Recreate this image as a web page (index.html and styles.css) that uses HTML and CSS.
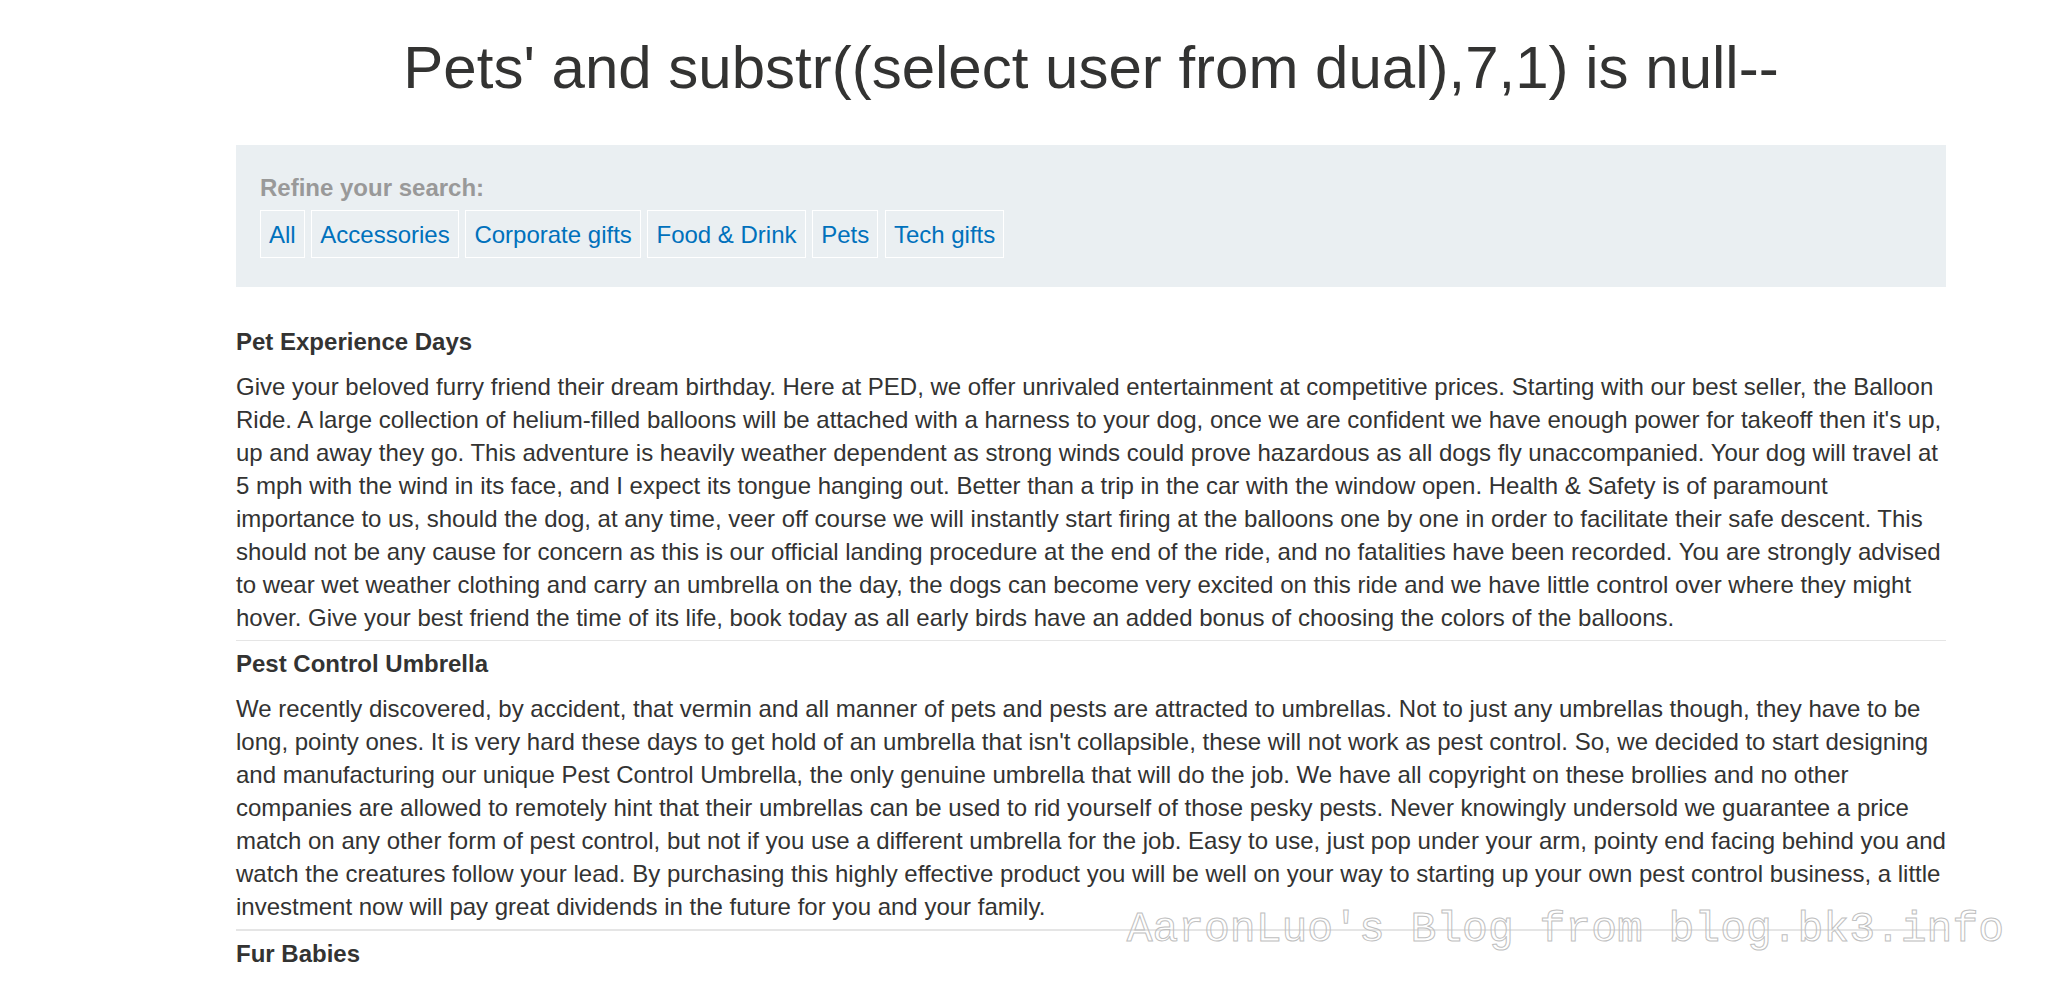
FILE: index.html
```html
<!DOCTYPE html>
<html lang="en">
<head>
<meta charset="utf-8">
<title>Pets</title>
<link rel="stylesheet" href="styles.css">
</head>
<body>
<main class="page">
  <h1 class="title">Pets' and substr((select user from dual),7,1) is null--</h1>
  <nav class="filters" aria-labelledby="refine">
    <p class="filters-label" id="refine">Refine your search:</p>
    <div class="filters-list">
      <a class="filter" href="#">All</a>
      <a class="filter" href="#">Accessories</a>
      <a class="filter" href="#">Corporate gifts</a>
      <a class="filter" href="#">Food &amp; Drink</a>
      <a class="filter" href="#">Pets</a>
      <a class="filter" href="#">Tech gifts</a>
    </div>
  </nav>
  <article class="product">
    <h2 class="product-name">Pet Experience Days</h2>
    <p class="product-text">Give your beloved furry friend their dream birthday. Here at PED, we offer unrivaled entertainment at competitive prices. Starting with our best seller, the Balloon Ride. A large collection of helium-filled balloons will be attached with a harness to your dog, once we are confident we have enough power for takeoff then it's up, up and away they go. This adventure is heavily weather dependent as strong winds could prove hazardous as all dogs fly unaccompanied. Your dog will travel at 5 mph with the wind in its face, and I expect its tongue hanging out. Better than a trip in the car with the window open. Health &amp; Safety is of paramount importance to us, should the dog, at any time, veer off course we will instantly start firing at the balloons one by one in order to facilitate their safe descent. This should not be any cause for concern as this is our official landing procedure at the end of the ride, and no fatalities have been recorded. You are strongly advised to wear wet weather clothing and carry an umbrella on the day, the dogs can become very excited on this ride and we have little control over where they might hover. Give your best friend the time of its life, book today as all early birds have an added bonus of choosing the colors of the balloons.</p>
  </article>
  <hr class="rule">
  <article class="product">
    <h2 class="product-name">Pest Control Umbrella</h2>
    <p class="product-text">We recently discovered, by accident, that vermin and all manner of pets and pests are attracted to umbrellas. Not to just any umbrellas though, they have to be long, pointy ones. It is very hard these days to get hold of an umbrella that isn't collapsible, these will not work as pest control. So, we decided to start designing and manufacturing our unique Pest Control Umbrella, the only genuine umbrella that will do the job. We have all copyright on these brollies and no other companies are allowed to remotely hint that their umbrellas can be used to rid yourself of those pesky pests. Never knowingly undersold we guarantee a price match on any other form of pest control, but not if you use a different umbrella for the job. Easy to use, just pop under your arm, pointy end facing behind you and watch the creatures follow your lead. By purchasing this highly effective product you will be well on your way to starting up your own pest control business, a little investment now will pay great dividends in the future for you and your family.</p>
  </article>
  <hr class="rule rule-thick">
  <article class="product">
    <h2 class="product-name">Fur Babies</h2>
  </article>
</main>
<div class="watermark">AaronLuo's Blog from blog.bk3.info</div>
</body>
</html>
```

FILE: styles.css
```css
* {
  box-sizing: border-box;
}

body {
  margin: 0;
  background: #fff;
  color: #333332;
  font-family: "Liberation Sans", Arial, sans-serif;
  font-size: 24px;
  line-height: 33px;
}

.page {
  padding: 35px 100px 0 236px;
}

.title {
  margin: 0 0 44px;
  font-size: 60px;
  font-weight: 400;
  line-height: 66px;
  text-align: center;
}

.filters {
  margin-bottom: 38px;
  padding: 26px 24px 29px;
  background: #eaeff2;
}

.filters-label {
  margin: 0 0 6px;
  color: #999;
  font-weight: 700;
}

.filter {
  display: inline-block;
  padding: 7px 8px 6px;
  border: 1px solid #fff;
  color: #0071bc;
  text-decoration: none;
}

.product-name {
  margin: 0 0 12px;
  font-size: 24px;
  font-weight: 700;
}

.product-text {
  margin: 0;
}

.rule {
  height: 1px;
  margin: 6px 0;
  border: 0;
  background: #e5e5e5;
}

.rule-thick {
  height: 2px;
}

.watermark {
  position: absolute;
  right: 42px;
  bottom: 42px;
  color: transparent;
  font-family: "Liberation Mono", "Courier New", monospace;
  font-size: 43px;
  line-height: 32px;
  white-space: nowrap;
  -webkit-text-stroke: 1px #c0c0c0;
  pointer-events: none;
}
```
